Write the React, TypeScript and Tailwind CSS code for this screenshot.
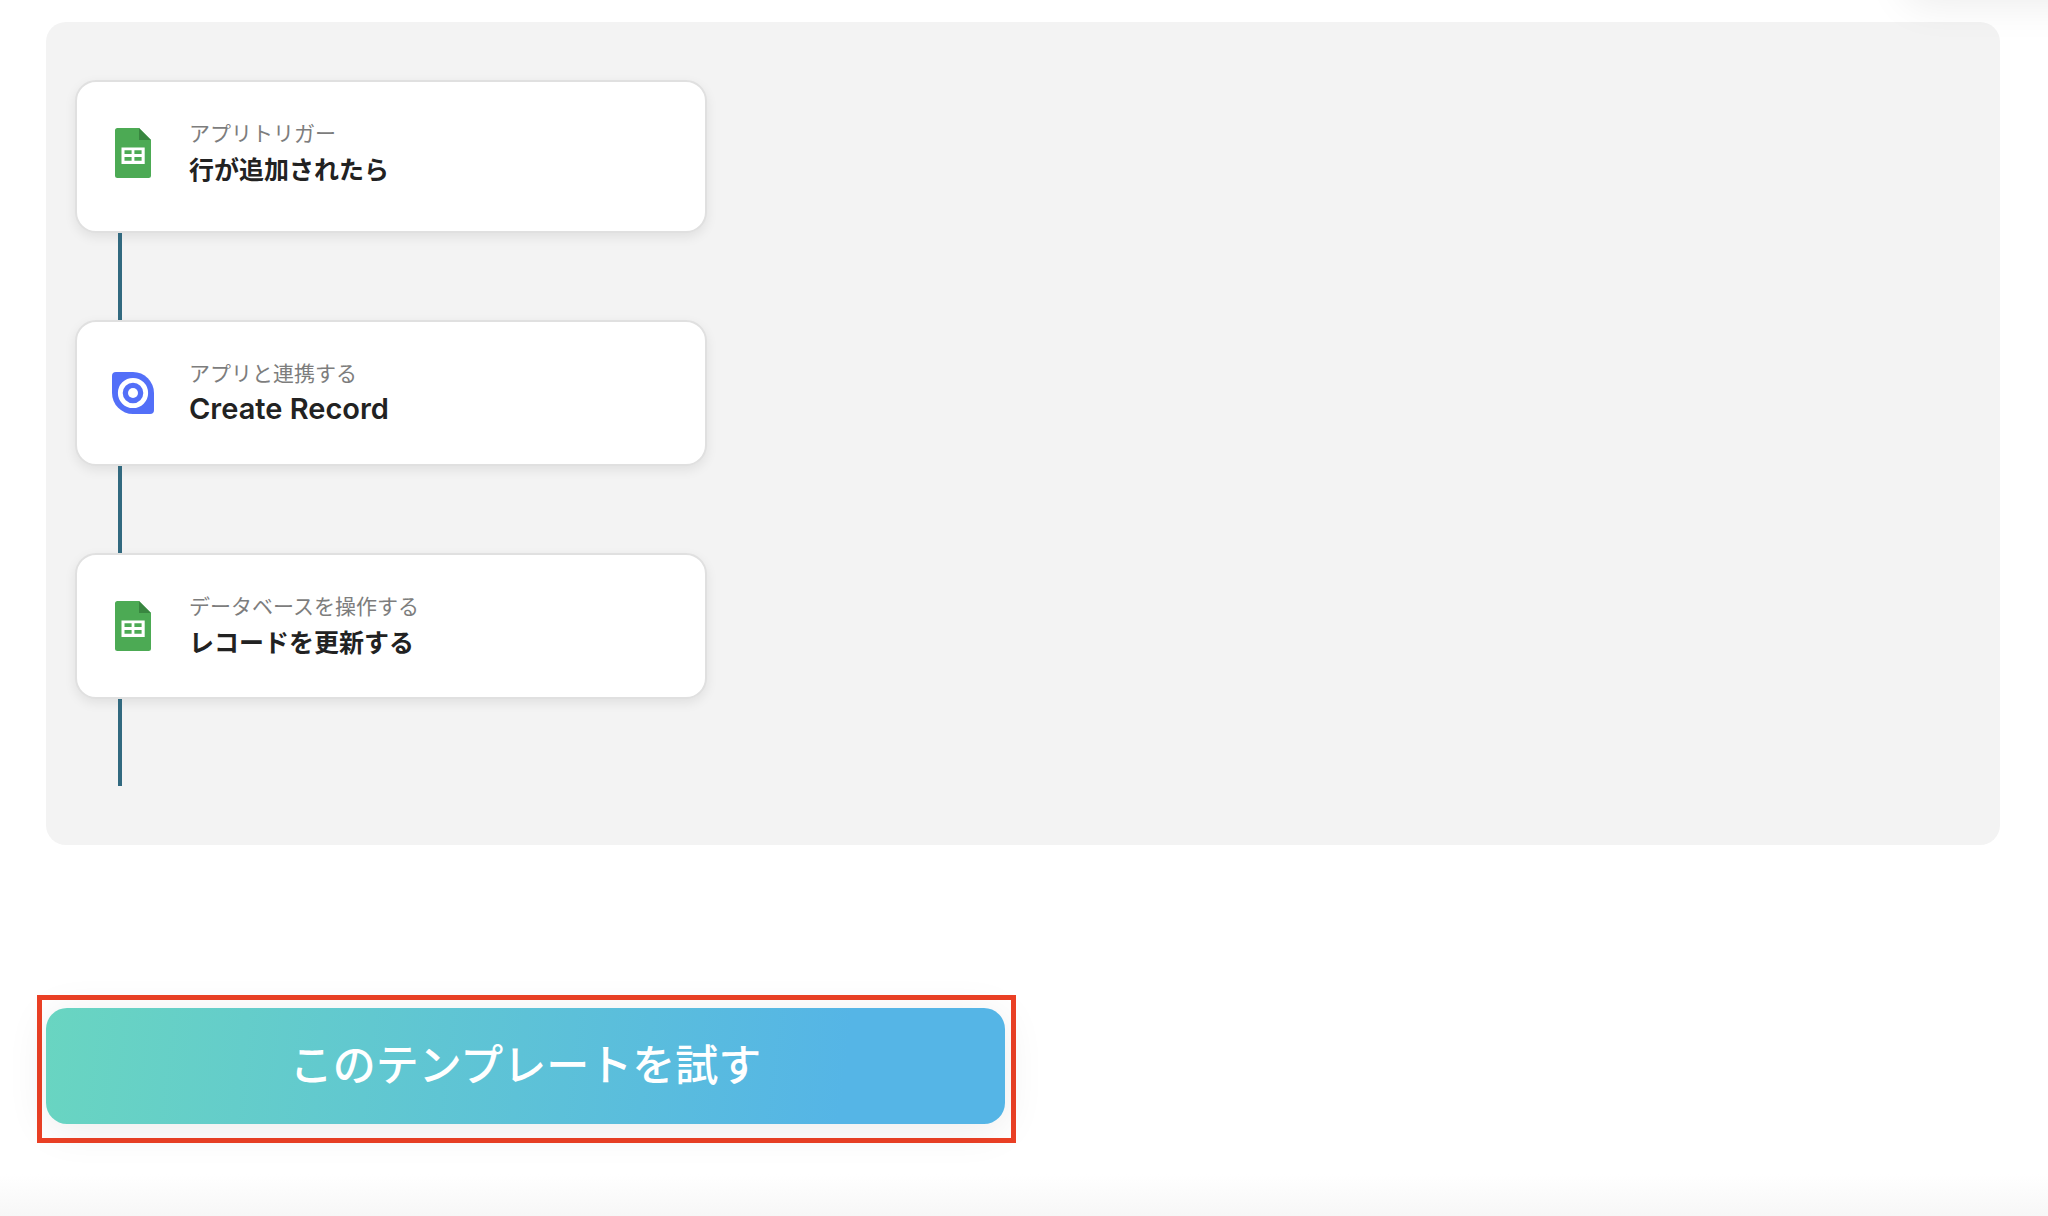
import { clsx } from 'clsx'

type StepIcon = 'sheets' | 'record'

interface FlowStep {
  icon: StepIcon
  label: string
  title: string
  latin?: boolean
}

const steps: FlowStep[] = [
  { icon: 'sheets', label: 'アプリトリガー', title: '行が追加されたら' },
  { icon: 'record', label: 'アプリと連携する', title: 'Create Record', latin: true },
  { icon: 'sheets', label: 'データベースを操作する', title: 'レコードを更新する' },
]

function SheetsIcon() {
  return (
    <svg viewBox="0 0 42 50" className="h-[50px] w-[42px] shrink-0" aria-hidden="true">
      <path d="M5.500 0H27L39 12V47.500a2.500 2.500 0 0 1-2.500 2.500H5.500A2.500 2.500 0 0 1 3 47.500V2.500A2.500 2.500 0 0 1 5.500 0Z" fill="#4caa54" />
      <path d="M27 0L39 12H27Z" fill="#398640" />
      <path
        d="M9.500 19.500H32.700V36H9.500ZM12.500 22.300V26H19.600V22.300ZM22.400 22.300V26H29.600V22.300ZM12.500 29V32.800H19.600V29ZM22.400 29V32.800H29.600V29Z"
        fill="#fff"
        fillRule="evenodd"
      />
    </svg>
  )
}

function RecordIcon() {
  return (
    <svg viewBox="0 0 42 42" className="h-[42px] w-[42px] shrink-0" aria-hidden="true">
      <path d="M4 0H21A21 21 0 0 1 42 21V38a4 4 0 0 1-4 4H21A21 21 0 0 1 0 21V4a4 4 0 0 1 4-4Z" fill="#536ff8" />
      <circle cx="21" cy="21" r="12.700" fill="none" stroke="#fff" strokeWidth="4.800" />
      <circle cx="21" cy="21" r="5" fill="#fff" />
    </svg>
  )
}

function StepCard({ step, first }: { step: FlowStep; first: boolean }) {
  return (
    <div
      className={clsx(
        'flex w-full max-w-[632px] items-center gap-[35px] rounded-[21px] border-2 border-[#e0e0e0] bg-white px-[35px] pt-[34px] shadow-[0_4px_12px_rgba(0,0,0,0.08)]',
        first ? 'pb-[41px]' : 'pb-[34px]'
      )}
    >
      {step.icon === 'sheets' ? <SheetsIcon /> : <RecordIcon />}
      <div className="pb-[2px]">
        <p className="text-[21px] leading-8 text-[#7d7d7d]">{step.label}</p>
        <h3 className="text-[25px] leading-10 font-bold text-[#222]">
          {step.latin ? (
            <span className="font-[Inter,sans-serif] text-[29px] leading-none font-semibold">{step.title}</span>
          ) : (
            step.title
          )}
        </h3>
      </div>
    </div>
  )
}

export default function App() {
  return (
    <div className="relative flex min-h-screen flex-col overflow-hidden bg-white font-['Noto_Sans_CJK_JP',sans-serif]">
      <main className="flex-1 pt-[22px] pr-12 pb-[31px] pl-[37px]">
        <section className="ml-[9px] rounded-[20px] bg-[#f3f3f3] px-[29px] pt-[58px] pb-[59px]">
          <ol>
            {steps.map((step, index) => (
              <li key={step.label}>
                <StepCard step={step} first={index === 0} />
                {/* Connector below the card */}
                <div className="relative ml-[43px] h-[87px] w-1 bg-[#31697f]" />
              </li>
            ))}
          </ol>
        </section>

        {/* Call to action */}
        <div className="mt-[150px] max-w-[979px] border-5 border-[#eb4025] pt-2 pr-[6px] pb-[14px] pl-1">
          <button
            type="button"
            className="flex h-[116px] w-full items-center justify-center rounded-[21px] bg-[linear-gradient(97deg,#69d5c1_0%,#55b5e6_83%)] pb-2 text-[43px] leading-none font-medium text-white shadow-[0_6px_42px_rgba(0,0,0,0.08)]"
          >
            このテンプレートを試す
          </button>
        </div>
      </main>

      <footer className="h-[42px] bg-linear-to-b from-white to-[#f7f7f7]" />

      {/* Shadow cast by the panel above the page's top right corner */}
      <div className="pointer-events-none absolute -top-20 -right-20 h-20 w-56 rounded-[20px] shadow-[0_4px_42px_rgba(0,0,0,0.08)]" />
    </div>
  )
}
